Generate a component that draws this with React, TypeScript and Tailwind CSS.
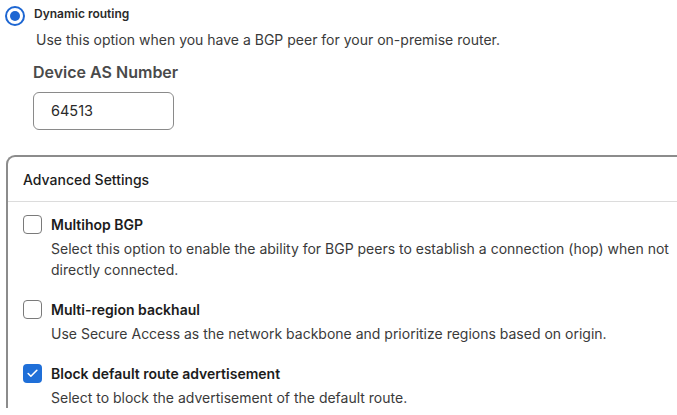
import { Check } from "lucide-react";

const options = [
  {
    title: "Multihop BGP",
    desc: "Select this option to enable the ability for BGP peers to establish a connection (hop) when not directly connected.",
    checked: false,
  },
  {
    title: "Multi-region backhaul",
    desc: "Use Secure Access as the network backbone and prioritize regions based on origin.",
    checked: false,
  },
  {
    title: "Block default route advertisement",
    desc: "Select to block the advertisement of the default route.",
    checked: true,
  },
];

function Checkbox({ checked }: { checked: boolean }) {
  return checked ? (
    <div className="w-[19px] h-[19px] rounded-[4px] bg-[#1f6fd8] flex items-center justify-center shrink-0">
      <Check size={13} strokeWidth={3} className="text-white" />
    </div>
  ) : (
    <div className="w-[19px] h-[19px] rounded-[4px] border-[1.5px] border-[#7a7a7a] bg-white shrink-0" />
  );
}

export default function App() {
  return (
    <main
      className="w-[677px] h-[415px] overflow-hidden bg-white text-[#1c1c1c]"
      style={{ fontFamily: "Inter, 'Noto Sans', sans-serif" }}
    >
      <div className="pt-[5px] pl-[5px] flex items-center gap-[9px] h-[26px]">
        <div className="w-[20px] h-[20px] rounded-full border-2 border-[#1d66d2] flex items-center justify-center">
          <div className="w-[10px] h-[10px] rounded-full bg-[#1d66d2]" />
        </div>
        <span className="text-[12px] font-semibold text-[#2a2a2a] -mt-[3px]">Dynamic routing</span>
      </div>

      <p className="ml-[36px] mt-[4px] text-[14px] leading-[20px] text-[#3a3a3a]">
        Use this option when you have a BGP peer for your on-premise router.
      </p>

      <p className="ml-[33px] mt-[11px] text-[16px] leading-[22px] font-semibold text-[#4a4a4a]">
        Device AS Number
      </p>

      <div className="ml-[33px] mt-[9px] w-[141px] h-[38px] rounded-[6px] border-[1.5px] border-[#8a8a8a] flex items-center px-[17px] text-[14.5px] text-[#2a2a2a]">
        64513
      </div>

      <section className="ml-[6px] mt-[25px] w-[700px] border-t-2 border-l-2 border-[#8c8c8c] rounded-tl-[9px]">
        <div className="h-[44px] flex items-center pl-[15px] text-[14px] font-medium text-[#1c1c1c]">
          Advanced Settings
        </div>
        <div className="h-px bg-[#dcdcdc]" />
        <div className="pl-[15px] pt-[13px] flex flex-col gap-[20px]">
          {options.map((o) => (
            <div key={o.title} className="flex gap-[9px]">
              <Checkbox checked={o.checked} />
              <div className="w-[625px]">
                <p className="text-[14px] leading-[19px] font-semibold text-[#1c1c1c]">{o.title}</p>
                <p className="mt-[4px] text-[14px] leading-[21px] text-[#3a3a3a]">{o.desc}</p>
              </div>
            </div>
          ))}
        </div>
      </section>
    </main>
  );
}
